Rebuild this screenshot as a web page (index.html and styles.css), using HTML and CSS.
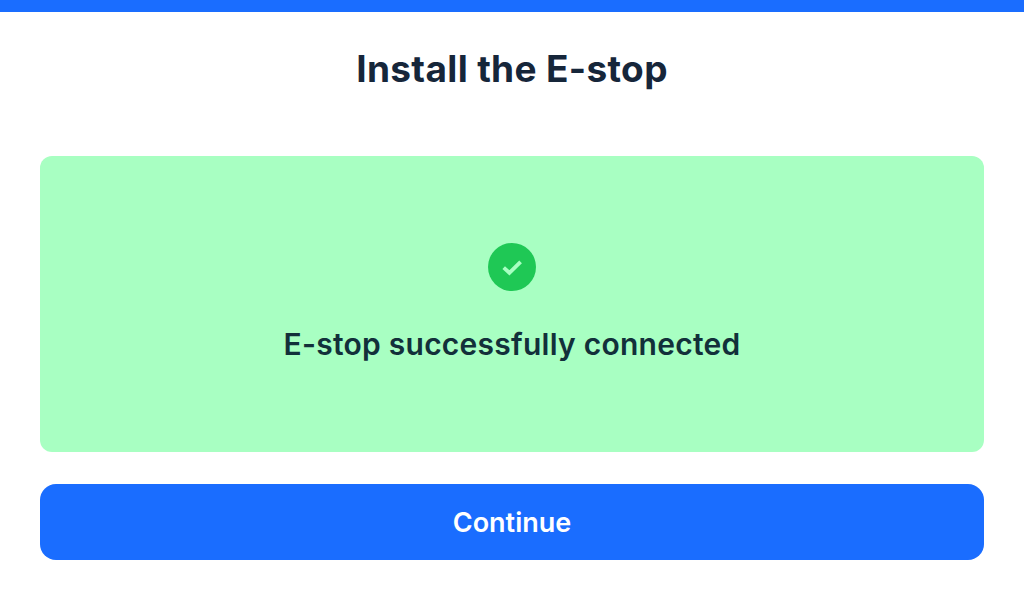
FILE: index.html
```html
<!DOCTYPE html>
<html lang="en">
<head>
<meta charset="utf-8">
<title>Install the E-stop</title>
<link rel="stylesheet" href="styles.css">
</head>
<body>
<div class="topbar"></div>
<main class="page">
  <h1 class="title">Install the E-stop</h1>
  <section class="status">
    <span class="status-icon">
      <svg width="48" height="48" viewBox="0 0 48 48" aria-hidden="true">
        <circle cx="24" cy="24" r="24" fill="#1fc855"/>
        <path d="M15.7 24.6 L21.4 29.8 L32.6 18.8" fill="none" stroke="#a8ffc2" stroke-width="3.8"/>
      </svg>
    </span>
    <p class="status-text">E-stop successfully connected</p>
  </section>
  <button class="continue">Continue</button>
</main>
</body>
</html>
```
FILE: styles.css
```css
* { box-sizing: border-box; }
html, body { margin: 0; padding: 0; }
body {
  width: 1024px;
  height: 600px;
  overflow: hidden;
  background: #fff;
  font-family: Inter, "Liberation Sans", sans-serif;
}
.topbar { height: 12px; background: #1a6dff; }
.page {
  display: flex;
  flex-direction: column;
  padding: 0 40px;
}
.title {
  margin: 0;
  height: 144px;
  padding-top: 32px;
  text-align: center;
  font-size: 37px;
  line-height: 50px;
  font-weight: 700;
  letter-spacing: 0.35px;
  color: #16263a;
}
.status {
  height: 296px;
  border-radius: 12px;
  background: #a8ffc2;
  display: flex;
  flex-direction: column;
  align-items: center;
  justify-content: center;
  gap: 32px;
}
.status-icon { display: block; height: 48px; }
.status-text {
  margin: 0;
  font-size: 30px;
  line-height: 42px;
  font-weight: 600;
  letter-spacing: 0.25px;
  color: #12303a;
}
.continue {
  margin-top: 32px;
  height: 76px;
  border: 0;
  border-radius: 16px;
  background: #1a6dff;
  color: #fff;
  font-family: inherit;
  font-size: 27px;
  font-weight: 600;
}
```
